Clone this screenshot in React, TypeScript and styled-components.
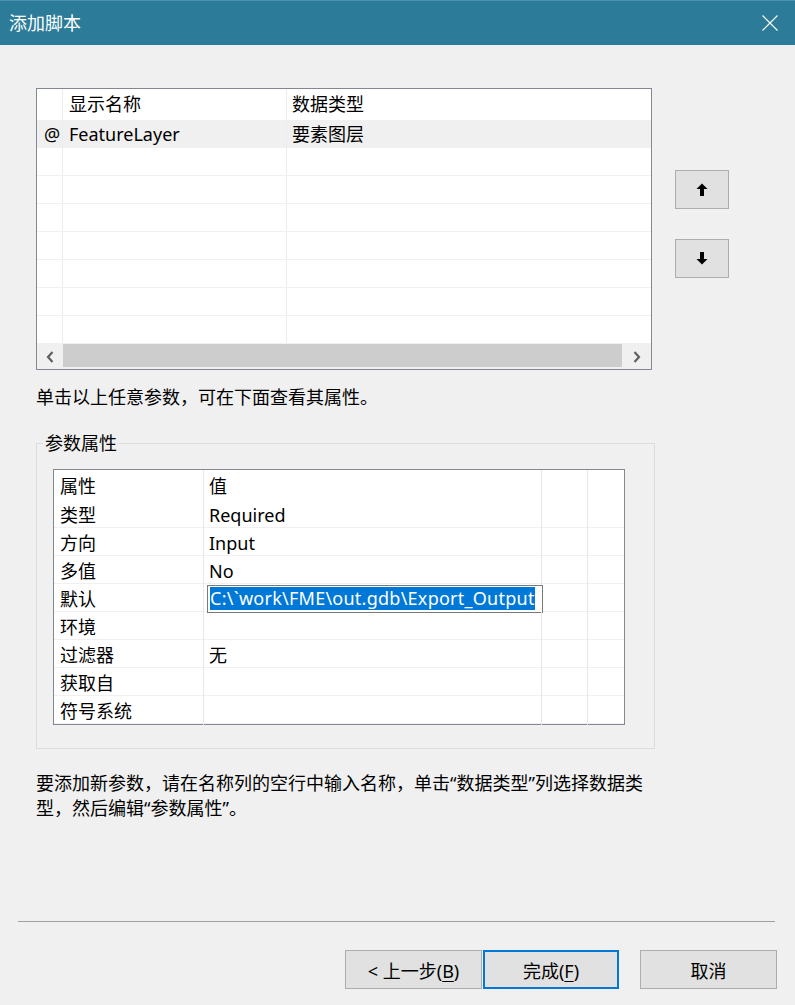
import styled, { createGlobalStyle } from "styled-components";

const uiFont = `"Noto Sans", "Noto Sans CJK SC", sans-serif`;

const GlobalStyle = createGlobalStyle`
  html, body {
    margin: 0;
    padding: 0;
    background: #f0f0f0;
  }
  body {
    font-family: ${uiFont};
    font-size: 18px;
    color: #000;
  }
  * { box-sizing: border-box; }
`;

const Window = styled.div`
  display: flex;
  flex-direction: column;
  width: 795px;
  height: 1005px;
  background: #f0f0f0;
`;

const TitleBar = styled.header`
  display: flex;
  align-items: center;
  justify-content: space-between;
  height: 45px;
  padding: 0 17px 0 9px;
  background: #2b7b99;
  border-top: 1px solid #4c93ae;
  color: #fff;
`;

const Title = styled.h1`
  margin: 0;
  font-size: 18px;
  font-weight: normal;
  line-height: 24px;
`;

const CloseButton = styled.button`
  display: flex;
  padding: 0;
  border: 0;
  background: none;
  cursor: pointer;
`;

const Body = styled.main`
  flex: 1;
  padding: 43px 0 0 36px;
`;

const TopRow = styled.div`
  display: flex;
  gap: 23px;
`;

const ListView = styled.div`
  display: flex;
  flex-direction: column;
  width: 616px;
  height: 282px;
  border: 1px solid #828790;
  background: #fff;
`;

const ListRows = styled.div`
  flex: 1;
  overflow: hidden;
`;

const ListRow = styled.div<{ $header?: boolean; $selected?: boolean }>`
  display: grid;
  grid-template-columns: 26px 224px 1fr;
  height: ${p => (p.$header ? "31px" : "28px")};
  line-height: ${p => (p.$header ? "31px" : "28px")};
  background: ${p => (p.$selected ? "#f0f0f0" : "#fff")};
  border-bottom: ${p => (p.$header ? "none" : "1px solid #f0f0f0")};
`;

const ListCell = styled.div<{ $pad: number; $last?: boolean }>`
  padding-left: ${p => p.$pad}px;
  border-right: ${p => (p.$last ? "none" : "1px solid #ececec")};
  white-space: nowrap;
  overflow: hidden;
`;

const HScroll = styled.div`
  display: flex;
  height: 25px;
  background: #f0f0f0;
`;

const ScrollArrow = styled.div<{ $w: number }>`
  display: flex;
  align-items: center;
  justify-content: center;
  width: ${p => p.$w}px;
  color: #606060;
`;

const ScrollThumb = styled.div`
  flex: 1;
  margin-bottom: 2px;
  background: #cdcdcd;
`;

const MoveButtons = styled.div`
  display: flex;
  flex-direction: column;
  gap: 30px;
  padding-top: 82px;
`;

const MoveButton = styled.button`
  display: flex;
  align-items: center;
  justify-content: center;
  width: 54px;
  height: 39px;
  padding: 0;
  background: #e1e1e1;
  border: 1px solid #adadad;
`;

const Hint = styled.p`
  margin: 15px 0 0;
  line-height: 24px;
`;

const GroupBox = styled.fieldset`
  width: 619px;
  margin: 22px 0 0;
  padding: 14px 0 23px 16px;
  border: 1px solid #dcdcdc;
`;

const Legend = styled.legend`
  margin-left: -10px;
  padding: 0 2px;
  line-height: 24px;
`;

const PropGrid = styled.div`
  width: 572px;
  border: 1px solid #828790;
  background: #fff;
`;

const PropRow = styled.div<{ $header?: boolean }>`
  display: grid;
  grid-template-columns: 150px 338px 46px 1fr;
  height: ${p => (p.$header ? "30px" : "28px")};
  line-height: ${p => (p.$header ? "32px" : "30px")};
  border-bottom: ${p => (p.$header ? "none" : "1px solid #f0f0f0")};
`;

const PropCell = styled.div<{ $pad?: number; $last?: boolean }>`
  padding-left: ${p => p.$pad ?? 0}px;
  border-right: ${p => (p.$last ? "none" : "1px solid #e8e8e8")};
  white-space: nowrap;
`;

const EditBox = styled.div`
  width: 336px;
  height: 28px;
  margin-top: 1px;
  padding: 1px 2px;
  border: 1px solid #7a7a7a;
  background: #fff;
  line-height: 23px;
`;

const Selection = styled.span`
  display: inline-block;
  background: #0078d7;
  color: #fff;
  line-height: 23px;
  letter-spacing: 0.25px;
`;

const Note = styled.p`
  width: 618px;
  margin: 22px 0 0;
  line-height: 25px;
`;

const Footer = styled.footer`
  display: flex;
  flex-direction: column;
`;

const Separator = styled.hr`
  height: 1px;
  margin: 0 20px 0 18px;
  border: 0;
  background: #a0a0a0;
`;

const ButtonRow = styled.div`
  display: flex;
  justify-content: flex-end;
  padding: 28px 18px 16px 0;
`;

const DialogButton = styled.button<{ $primary?: boolean; $gap?: number }>`
  width: ${p => (p.$primary ? "136px" : "137px")};
  height: 39px;
  margin-left: ${p => p.$gap ?? 0}px;
  padding: 0;
  font-family: ${uiFont};
  font-size: 18px;
  color: #000;
  background: #e1e1e1;
  border: ${p => (p.$primary ? "2px solid #0078d7" : "1px solid #adadad")};
`;

const Key = styled.span`
  text-decoration: underline;
  text-underline-offset: 3px;
`;

const Chevron = ({ dir }: { dir: "left" | "right" }) => (
  <svg width="8" height="12" viewBox="0 0 8 12">
    <path
      d={dir === "left" ? "M6.5 1 L2 6 L6.5 11" : "M1.5 1 L6 6 L1.5 11"}
      fill="none"
      stroke="currentColor"
      strokeWidth="2.2"
    />
  </svg>
);

const Arrow = ({ dir }: { dir: "up" | "down" }) => (
  <svg width="12" height="13" viewBox="0 0 12 13">
    <g transform={dir === "down" ? "rotate(180 6 6.5)" : undefined}>
      <polygon points="0.5,6 6,0.5 11.5,6" fill="#000" />
      <rect x="4" y="5.5" width="4" height="7.5" fill="#000" />
    </g>
  </svg>
);

const props: [string, string][] = [
  ["类型", "Required"],
  ["方向", "Input"],
  ["多值", "No"],
  ["默认", "@edit"],
  ["环境", ""],
  ["过滤器", "无"],
  ["获取自", ""],
  ["符号系统", ""],
];

export default function App() {
  const emptyRows = Array.from({ length: 7 });

  return (
    <Window>
      <GlobalStyle />
      <TitleBar>
        <Title>添加脚本</Title>
        <CloseButton aria-label="关闭">
          <svg width="16" height="16" viewBox="0 0 16 16">
            <path d="M0.5 0.5 L15.5 15.5 M15.5 0.5 L0.5 15.5" stroke="#fff" strokeWidth="1.1" />
          </svg>
        </CloseButton>
      </TitleBar>

      <Body>
        <TopRow>
          <ListView>
            <ListRows>
              <ListRow $header>
                <ListCell $pad={8} />
                <ListCell $pad={6}>显示名称</ListCell>
                <ListCell $pad={5} $last>数据类型</ListCell>
              </ListRow>
              <ListRow $selected>
                <ListCell $pad={7}>@</ListCell>
                <ListCell $pad={6}>FeatureLayer</ListCell>
                <ListCell $pad={5} $last>要素图层</ListCell>
              </ListRow>
              {emptyRows.map((_, i) => (
                <ListRow key={i}>
                  <ListCell $pad={8} />
                  <ListCell $pad={6} />
                  <ListCell $pad={5} $last />
                </ListRow>
              ))}
            </ListRows>
            <HScroll>
              <ScrollArrow $w={26}><Chevron dir="left" /></ScrollArrow>
              <ScrollThumb />
              <ScrollArrow $w={29}><Chevron dir="right" /></ScrollArrow>
            </HScroll>
          </ListView>
          <MoveButtons>
            <MoveButton aria-label="上移"><Arrow dir="up" /></MoveButton>
            <MoveButton aria-label="下移"><Arrow dir="down" /></MoveButton>
          </MoveButtons>
        </TopRow>

        <Hint>单击以上任意参数，可在下面查看其属性。</Hint>

        <GroupBox>
          <Legend>参数属性</Legend>
          <PropGrid>
            <PropRow $header>
              <PropCell $pad={6}>属性</PropCell>
              <PropCell $pad={5}>值</PropCell>
              <PropCell />
              <PropCell $last />
            </PropRow>
            {props.map(([name, value]) => (
              <PropRow key={name}>
                <PropCell $pad={6}>{name}</PropCell>
                <PropCell $pad={value === "@edit" ? 3 : 5}>
                  {value === "@edit" ? (
                    <EditBox>
                      <Selection>C:\`work\FME\out.gdb\Export_Output</Selection>
                    </EditBox>
                  ) : (
                    value
                  )}
                </PropCell>
                <PropCell />
                <PropCell $last />
              </PropRow>
            ))}
          </PropGrid>
        </GroupBox>

        <Note>
          要添加新参数，请在名称列的空行中输入名称，单击“数据类型”列选择数据类型，然后编辑“参数属性”。
        </Note>
      </Body>

      <Footer>
        <Separator />
        <ButtonRow>
          <DialogButton>&lt; 上一步(<Key>B</Key>)</DialogButton>
          <DialogButton $primary $gap={1}>完成(<Key>F</Key>)</DialogButton>
          <DialogButton $gap={21}>取消</DialogButton>
        </ButtonRow>
      </Footer>
    </Window>
  );
}
